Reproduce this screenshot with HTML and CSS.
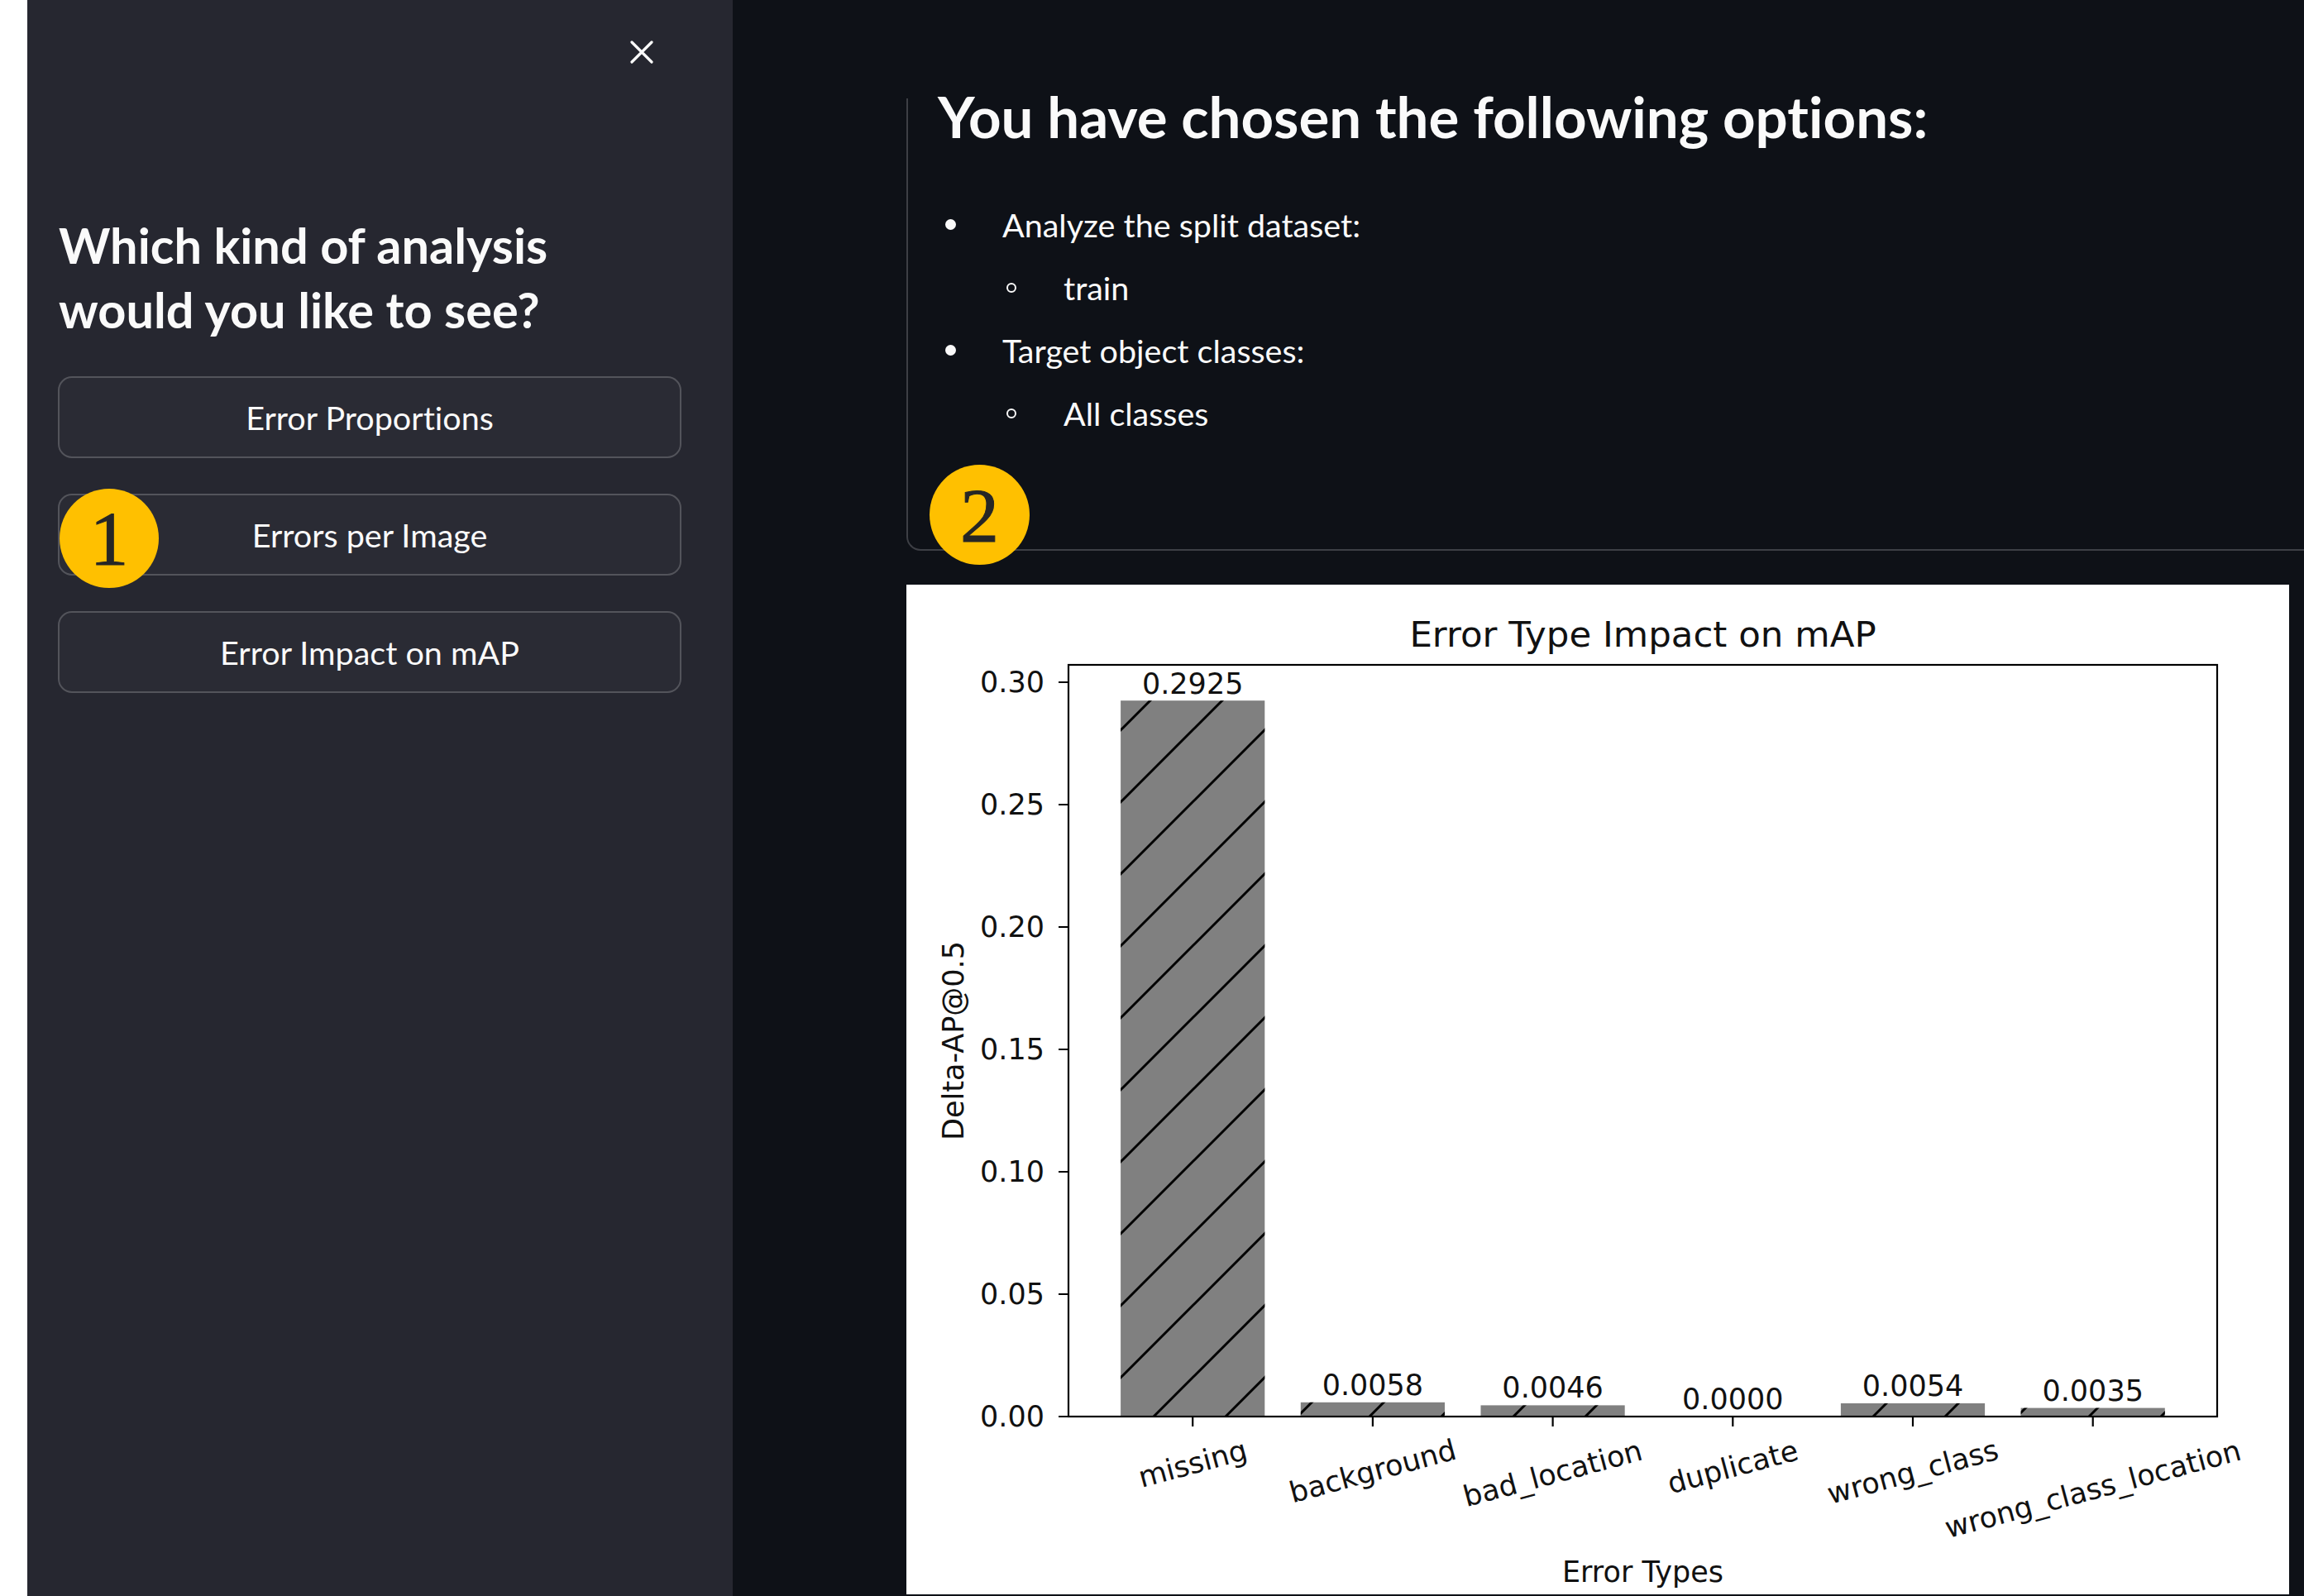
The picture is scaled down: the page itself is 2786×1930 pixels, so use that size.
FILE: index.html
```html
<!DOCTYPE html>
<html lang="en">
<head>
<meta charset="utf-8">
<title>Error analysis</title>
<link rel="stylesheet" href="styles.css">
</head>
<body>
<div class="edge"></div>
<aside class="sidebar">
  <div class="close-row">
    <svg class="close" width="28" height="28" viewBox="0 0 28 28"><path d="M2 2 L26 26 M26 2 L2 26" stroke="#fafafa" stroke-width="3.2" stroke-linecap="round"/></svg>
  </div>
  <h2 class="side-title">Which kind of analysis would you like to see?</h2>
  <div class="btn">Error Proportions</div>
  <div class="btn">Errors per Image<span class="badge badge-1">1</span></div>
  <div class="btn">Error Impact on mAP</div>
</aside>
<main class="main">
  <section class="panel">
    <h1 class="title">You have chosen the following options:</h1>
    <ul class="opts">
      <li><span class="mk"><span class="dot"></span></span>Analyze the split dataset:</li>
      <li class="sub"><span class="mk"><span class="ring"></span></span>train</li>
      <li><span class="mk"><span class="dot"></span></span>Target object classes:</li>
      <li class="sub"><span class="mk"><span class="ring"></span></span>All classes</li>
    </ul>
    <span class="badge badge-2">2</span>
  </section>
  <figure class="chart">
    <svg width="1672" height="1221" viewBox="0 0 1672 1221">
      <defs>
        <pattern id="hatch" patternUnits="userSpaceOnUse" width="87" height="87">
          <path d="M-10 10 L10 -10 M0 87 L87 0 M77 97 L97 77" stroke="#000" stroke-width="3"/>
        </pattern>
      </defs>
      <g class="ct">
        <text class="c-title" x="890.5" y="75" text-anchor="middle">Error Type Impact on mAP</text>
        <rect class="bar" x="259.1" y="140.2" width="174.2" height="865.8"/>
        <rect class="hat" x="259.1" y="140.2" width="174.2" height="865.8"/>
        <rect class="bar" x="476.8" y="988.8" width="174.2" height="17.2"/>
        <rect class="hat" x="476.8" y="988.8" width="174.2" height="17.2"/>
        <rect class="bar" x="694.5" y="992.4" width="174.2" height="13.6"/>
        <rect class="hat" x="694.5" y="992.4" width="174.2" height="13.6"/>
        <rect class="bar" x="1129.9" y="990" width="174.2" height="16"/>
        <rect class="hat" x="1129.9" y="990" width="174.2" height="16"/>
        <rect class="bar" x="1347.6" y="995.6" width="174.2" height="10.4"/>
        <rect class="hat" x="1347.6" y="995.6" width="174.2" height="10.4"/>
        <rect class="spine" x="196" y="97" width="1389" height="909"/>
        <path class="tick" d="M184 1006H196M184 858H196M184 710H196M184 562H196M184 414H196M184 266H196M184 118H196"/>
        <path class="tick" d="M346.2 1006V1018M563.9 1006V1018M781.6 1006V1018M999.3 1006V1018M1217 1006V1018M1434.7 1006V1018"/>
        <g class="ylab" text-anchor="end">
          <text x="167" y="1006">0.00</text>
          <text x="167" y="858">0.05</text>
          <text x="167" y="710">0.10</text>
          <text x="167" y="562">0.15</text>
          <text x="167" y="414">0.20</text>
          <text x="167" y="266">0.25</text>
          <text x="167" y="118">0.30</text>
        </g>
        <g class="vals" text-anchor="middle">
          <text x="346.2" y="132">0.2925</text>
          <text x="563.9" y="980">0.0058</text>
          <text x="781.6" y="983">0.0046</text>
          <text x="999.3" y="997">0.0000</text>
          <text x="1217" y="981">0.0054</text>
          <text x="1434.7" y="987">0.0035</text>
        </g>
        <g class="xlab" text-anchor="middle">
          <text x="346.2" y="1063" transform="rotate(-15 346.2 1063)">missing</text>
          <text x="563.9" y="1072" transform="rotate(-15 563.9 1072)">background</text>
          <text x="781.6" y="1075" transform="rotate(-15 781.6 1075)">bad_location</text>
          <text x="999.3" y="1067" transform="rotate(-15 999.3 1067)">duplicate</text>
          <text x="1217" y="1073" transform="rotate(-15 1217 1073)">wrong_class</text>
          <text x="1434.7" y="1094" transform="rotate(-15 1434.7 1094)">wrong_class_location</text>
        </g>
        <text class="axlab" x="57" y="551.5" text-anchor="middle" transform="rotate(-90 57 551.5)">Delta-AP@0.5</text>
        <text class="axlab2" x="890.5" y="1206" text-anchor="middle">Error Types</text>
      </g>
    </svg>
  </figure>
</main>
</body>
</html>
```

FILE: styles.css
```css
html, body {
  margin: 0;
  padding: 0;
}
body {
  width: 2786px;
  height: 1930px;
  overflow: hidden;
  display: flex;
  background: #0e1117;
  color: #fafafa;
  font-family: "Lato", "Open Sans", sans-serif;
  font-variant-ligatures: none;
}
.edge {
  flex: none;
  width: 33px;
  background: #ffffff;
}
.sidebar {
  flex: none;
  width: 853px;
  box-sizing: border-box;
  background: #262730;
  padding: 49px 62px 0 37px;
  display: flex;
  flex-direction: column;
}
.close-row {
  display: flex;
  justify-content: flex-end;
  height: 28px;
  padding-right: 34px;
}
.side-title {
  margin: 180px 0 42px 1px;
  font-size: 59.5px;
  line-height: 78px;
  font-weight: 700;
  width: 680px;
}
.btn {
  position: relative;
  height: 99px;
  box-sizing: border-box;
  border: 2px solid rgba(250, 250, 250, 0.2);
  border-radius: 17px;
  background: #2a2b34;
  display: flex;
  align-items: center;
  justify-content: center;
  font-size: 39.5px;
}
.btn + .btn {
  margin-top: 43px;
}
.badge {
  position: absolute;
  width: 120px;
  height: 120px;
  border-radius: 50%;
  background: #ffc000;
  color: #262626;
  display: flex;
  align-items: center;
  justify-content: center;
  font-family: "Liberation Serif", serif;
  font-size: 94px;
  line-height: 1;
  -webkit-text-stroke: 1px #262626;
}
.badge-1 {
  left: 0;
  top: -8px;
}
.badge-2 {
  left: 26px;
  bottom: -19px;
  width: 121px;
  height: 121px;
}
.main {
  flex: 1;
  min-width: 0;
  box-sizing: border-box;
  padding: 119px 19px 0 210px;
  display: flex;
  flex-direction: column;
}
.panel {
  position: relative;
  height: 547px;
  box-sizing: border-box;
  margin-right: -60px;
  border-left: 2px solid #3d3f45;
  border-bottom: 2px solid #3d3f45;
  border-bottom-left-radius: 17px;
  padding-left: 36px;
}
.title {
  margin: -19px 0 0;
  font-size: 69px;
  line-height: 1.2;
  font-weight: 700;
}
.opts {
  list-style: none;
  margin: 51px 0 0;
  padding: 0;
  font-size: 39.5px;
  line-height: 76px;
}
.opts li {
  display: flex;
  align-items: center;
}
.opts li.sub {
  padding-left: 74px;
}
.mk {
  flex: none;
  width: 78px;
  display: flex;
  align-items: center;
}
.dot {
  margin-left: 9px;
  width: 13px;
  height: 13px;
  border-radius: 50%;
  background: #fafafa;
}
.ring {
  margin-left: 9px;
  width: 8px;
  height: 8px;
  border-radius: 50%;
  border: 2.5px solid #fafafa;
}
.chart {
  margin: 41px 0 0;
  height: 1221px;
  width: 1672px;
  background: #ffffff;
  flex: none;
}
.chart svg {
  display: block;
}
.ct text {
  font-family: "DejaVu Sans", sans-serif;
  font-size: 35px;
  fill: #111;
}
.ct .c-title {
  font-size: 43.5px;
}
.ylab text {
  dominant-baseline: central;
}
.xlab text {
  dominant-baseline: central;
}
.axlab {
  dominant-baseline: central;
}
.bar {
  fill: #808080;
}
.hat {
  fill: url(#hatch);
}
.spine {
  fill: none;
  stroke: #000;
  stroke-width: 2.2;
}
.tick {
  stroke: #000;
  stroke-width: 2.2;
  fill: none;
}
```
